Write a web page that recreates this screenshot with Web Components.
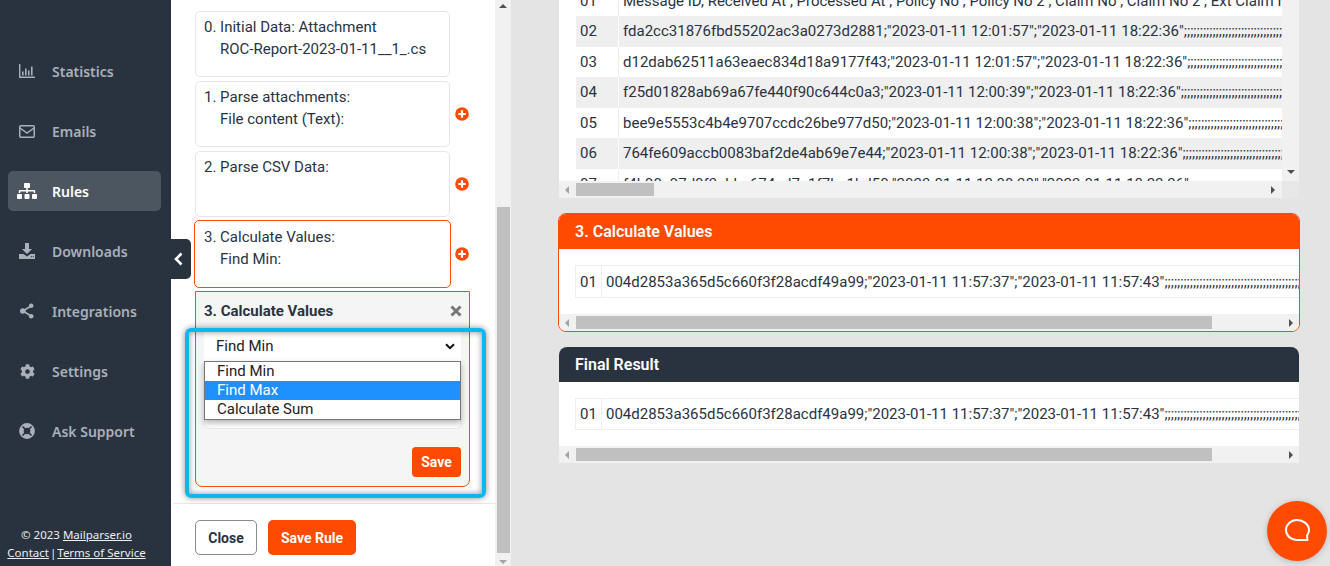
<!DOCTYPE html>
<html lang="en">
<head>
<meta charset="utf-8">
<title>Mailparser rule editor</title>
<style>
    html, body { margin: 0; padding: 0; height: 566px; overflow: hidden; }
    body { font-family: Roboto, "Liberation Sans", sans-serif; font-size: 14px; color: #29333f; }
</style>
</head>
<body>
<rule-app>
    <side-nav slot="nav">
        <nav-item icon="stats">Statistics</nav-item>
        <nav-item icon="mail">Emails</nav-item>
        <nav-item icon="rules" active>Rules</nav-item>
        <nav-item icon="download">Downloads</nav-item>
        <nav-item icon="share">Integrations</nav-item>
        <nav-item icon="cog">Settings</nav-item>
        <nav-item icon="ring">Ask Support</nav-item>
    </side-nav>
    <rule-panel slot="panel">
        <step-card title-text="0. Initial Data: Attachment" sub="ROC-Report-2023-01-11__1_.cs" noplus></step-card>
        <step-card title-text="1. Parse attachments:" sub="File content (Text):"></step-card>
        <step-card title-text="2. Parse CSV Data:"></step-card>
        <step-card title-text="3. Calculate Values:" sub="Find Min:" active></step-card>
        <step-editor></step-editor>
    </rule-panel>
    <result-area slot="results">
        <data-card kind="plain" clip>
            <data-row num="01">Message ID, Received At , Processed At , Policy No , Policy No 2 , Claim No , Claim No 2 , Ext Claim No , Ext Claim No 2</data-row>
            <data-row num="02" shade>fda2cc31876fbd55202ac3a0273d2881;"2023-01-11 12:01:57";"2023-01-11 18:22:36";;;;;;;;;;;;;;;;;;;;;;;;;;;;;;;;;;;;;;;;;;;;;;;;;;;;;;;;;;;;;;;;;;;;;;;;</data-row>
            <data-row num="03">d12dab62511a63eaec834d18a9177f43;"2023-01-11 12:01:57";"2023-01-11 18:22:36";;;;;;;;;;;;;;;;;;;;;;;;;;;;;;;;;;;;;;;;;;;;;;;;;;;;;;;;;;;;;;;;;;;;;;;;</data-row>
            <data-row num="04" shade>f25d01828ab69a67fe440f90c644c0a3;"2023-01-11 12:00:39";"2023-01-11 18:22:36";;;;;;;;;;;;;;;;;;;;;;;;;;;;;;;;;;;;;;;;;;;;;;;;;;;;;;;;;;;;;;;;;;;;;;;;</data-row>
            <data-row num="05">bee9e5553c4b4e9707ccdc26be977d50;"2023-01-11 12:00:38";"2023-01-11 18:22:36";;;;;;;;;;;;;;;;;;;;;;;;;;;;;;;;;;;;;;;;;;;;;;;;;;;;;;;;;;;;;;;;;;;;;;;;</data-row>
            <data-row num="06" shade>764fe609accb0083baf2de4ab69e7e44;"2023-01-11 12:00:38";"2023-01-11 18:22:36";;;;;;;;;;;;;;;;;;;;;;;;;;;;;;;;;;;;;;;;;;;;;;;;;;;;;;;;;;;;;;;;;;;;;;;;</data-row>
            <data-row num="07">f4b90c97d0f3ebbc674ed7a1f7bc1bd50;"2023-01-11 12:00:38";"2023-01-11 18:22:36";;;;;;;;;;;;;;;;;;;;;;;;;;;;;;;;;;;;;;;;;;;;;;;;;;;;;;;;;;;;;;;;;;;;;;;;</data-row>
        </data-card>
        <data-card kind="orange" heading="3. Calculate Values">
            <data-row num="01" boxed tall>004d2853a365d5c660f3f28acdf49a99;"2023-01-11 11:57:37";"2023-01-11 11:57:43";;;;;;;;;;;;;;;;;;;;;;;;;;;;;;;;;;;;;;;;;;;;;;;;;;;;;;;;;;;;;;;;;;;;;;;;</data-row>
        </data-card>
        <data-card kind="dark" heading="Final Result">
            <data-row num="01" boxed>004d2853a365d5c660f3f28acdf49a99;"2023-01-11 11:57:37";"2023-01-11 11:57:43";;;;;;;;;;;;;;;;;;;;;;;;;;;;;;;;;;;;;;;;;;;;;;;;;;;;;;;;;;;;;;;;;;;;;;;;</data-row>
        </data-card>
    </result-area>
    <chat-bubble slot="chat"></chat-bubble>
</rule-app>

<script>
const ORANGE = '#ff4a00';

const NAV_ICONS = {
    stats: '<svg viewBox="0 0 16 14" width="16" height="14" fill="currentColor"><path d="M0 0h1.4v12.6H16V14H0z"/><path d="M3 7.5h1.6v4H3zM6 4.5h1.6v7H6zM9 6.5h1.6v5H9zM12 2.5h1.6v9H12z"/></svg>',
    mail: '<svg viewBox="0 0 16 13" width="16" height="13" fill="none" stroke="currentColor" stroke-width="1.5"><rect x=".75" y=".75" width="14.5" height="11.5" rx="1"/><path d="M1 3l7 5 7-5"/></svg>',
    rules: '<svg viewBox="0 0 640 512" width="20" height="16" fill="currentColor"><path d="M128 352H32c-17.67 0-32 14.33-32 32v96c0 17.67 14.33 32 32 32h96c17.67 0 32-14.33 32-32v-96c0-17.67-14.33-32-32-32zm-24-80h192v48h48v-48h192v48h48v-57.59c0-21.17-17.23-38.41-38.41-38.41H344v-64h40c17.67 0 32-14.33 32-32V32c0-17.67-14.33-32-32-32H256c-17.67 0-32 14.33-32 32v96c0 17.67 14.33 32 32 32h40v64H94.41C73.23 224 56 241.23 56 262.41V320h48v-48zm264 80h-96c-17.67 0-32 14.33-32 32v96c0 17.67 14.33 32 32 32h96c17.67 0 32-14.33 32-32v-96c0-17.67-14.33-32-32-32zm240 0h-96c-17.67 0-32 14.33-32 32v96c0 17.67 14.33 32 32 32h96c17.67 0 32-14.33 32-32v-96c0-17.67-14.33-32-32-32z"/></svg>',
    download: '<svg viewBox="0 0 16 16" width="16" height="16" fill="currentColor"><path d="M6 0h4v6h3l-5 5-5-5h3z"/><path d="M0 11h4.500L8 13.500 11.500 11H16v5H0z"/><circle cx="12.500" cy="13.600" r=".6" fill="#29333f"/><circle cx="14.300" cy="13.600" r=".6" fill="#29333f"/></svg>',
    share: '<svg viewBox="0 0 14 16" width="14" height="16" fill="currentColor" stroke="currentColor"><circle cx="11.200" cy="2.800" r="2.300" stroke="none"/><circle cx="2.800" cy="8" r="2.800" stroke="none"/><circle cx="11.200" cy="13.200" r="2.300" stroke="none"/><path d="M11 3L3 8l8 5" fill="none" stroke-width="1.6"/></svg>',
    cog: '<svg viewBox="0 0 512 512" width="15" height="15" fill="currentColor"><path d="M487.4 315.7l-42.6-24.6c4.3-23.2 4.3-47 0-70.2l42.6-24.6c4.9-2.8 7.1-8.6 5.5-14-11.1-35.6-30-67.8-54.7-94.6-3.8-4.1-10-5.1-14.8-2.3L380.8 110c-17.9-15.4-38.5-27.3-60.8-35.1V25.8c0-5.6-3.9-10.5-9.4-11.7-36.7-8.2-74.3-7.8-109.2 0-5.5 1.2-9.4 6.1-9.4 11.7V75c-22.2 7.9-42.8 19.8-60.8 35.1L88.7 85.5c-4.9-2.8-11-1.9-14.8 2.3-24.7 26.7-43.6 58.9-54.7 94.6-1.7 5.4.6 11.2 5.5 14L67.3 221c-4.3 23.2-4.3 47 0 70.2l-42.6 24.6c-4.9 2.8-7.1 8.6-5.5 14 11.1 35.6 30 67.8 54.7 94.6 3.8 4.1 10 5.1 14.8 2.3l42.6-24.6c17.9 15.4 38.5 27.3 60.8 35.1v49.2c0 5.6 3.9 10.5 9.4 11.7 36.7 8.2 74.3 7.8 109.2 0 5.5-1.2 9.4-6.1 9.4-11.7v-49.2c22.2-7.9 42.8-19.8 60.8-35.1l42.6 24.6c4.9 2.8 11 1.9 14.8-2.3 24.7-26.7 43.6-58.9 54.7-94.6 1.5-5.5-.7-11.3-5.6-14.1zM256 336c-44.1 0-80-35.9-80-80s35.9-80 80-80 80 35.9 80 80-35.9 80-80 80z"/></svg>',
    ring: '<svg viewBox="0 0 16 16" width="16" height="16"><circle cx="8" cy="8" r="5.6" fill="none" stroke="currentColor" stroke-width="4.6"/><path d="M3.500 3.500l2.600 2.600M12.500 3.500L9.900 6.100M3.500 12.500l2.600-2.600M12.500 12.500L9.900 9.900" stroke="#29333f" stroke-width="1.5"/></svg>'
};

class RuleApp extends HTMLElement {
    constructor() {
        super();
        this.attachShadow({ mode: 'open' });
    }

    connectedCallback() {
        this.shadowRoot.innerHTML = `
            <style>
                :host { display: flex; width: 1330px; height: 566px; overflow: hidden; position: relative; background: #e4e4e4; }
                ::slotted([slot="nav"]) { flex: 0 0 171px; }
                ::slotted([slot="panel"]) { flex: 0 0 340px; }
                ::slotted([slot="results"]) { flex: 1; min-width: 0; }
            </style>
            <slot name="nav"></slot>
            <slot name="panel"></slot>
            <slot name="results"></slot>
            <slot name="chat"></slot>
        `;
    }
}

class SideNav extends HTMLElement {
    constructor() {
        super();
        this.attachShadow({ mode: 'open' });
    }

    connectedCallback() {
        this.shadowRoot.innerHTML = `
            <style>
                :host {
                    display: flex;
                    flex-direction: column;
                    height: 566px;
                    box-sizing: border-box;
                    padding-top: 51px;
                    background: #29333f;
                    font-family: "Noto Sans", "Open Sans", sans-serif;
                    position: relative;
                }
                .items { display: flex; flex-direction: column; gap: 20px; }
                footer {
                    margin-top: auto;
                    padding: 0 18px 4px 0;
                    text-align: center;
                    color: #eceef0;
                    font-size: 11.5px;
                    line-height: 18px;
                    white-space: nowrap;
                }
                footer a { color: inherit; text-decoration: underline; }
                .pipe { margin: 0 -2px; }
                .toggle {
                    position: absolute;
                    left: 171px;
                    top: 239px;
                    width: 20px;
                    height: 40px;
                    background: #29333f;
                    border-radius: 0 5px 5px 0;
                    display: flex;
                    align-items: center;
                    padding-left: 3px;
                    box-sizing: border-box;
                }
            </style>
            <div class="items"><slot></slot></div>
            <footer>
                <div>© 2023 <a href="#">Mailparser.io</a></div>
                <div><a href="#">Contact</a> <span class="pipe">|</span> <a href="#">Terms of Service</a></div>
            </footer>
            <div class="toggle">
                <svg viewBox="0 0 9 14" width="9" height="14" fill="none" stroke="#fff" stroke-width="2.6"><path d="M7.500 1.500L2 7l5.500 5.500"/></svg>
            </div>
        `;
    }
}

class NavItem extends HTMLElement {
    constructor() {
        super();
        this.attachShadow({ mode: 'open' });
    }

    connectedCallback() {
        const icon = NAV_ICONS[this.getAttribute('icon')] || '';
        this.shadowRoot.innerHTML = `
            <style>
                :host {
                    display: flex;
                    align-items: center;
                    height: 40px;
                    margin: 0 10px 0 8px;
                    border-radius: 5px;
                    color: #a9b0b8;
                    font-size: 14px;
                    font-weight: 600;
                }
                :host([active]) { background: #4c5660; color: #fff; }
                .ico { flex: 0 0 38px; display: flex; justify-content: center; margin-right: 6px; box-sizing: border-box; }
            </style>
            <span class="ico">${icon}</span>
            <slot></slot>
        `;
    }
}

class RulePanel extends HTMLElement {
    constructor() {
        super();
        this.attachShadow({ mode: 'open' });
    }

    connectedCallback() {
        this.shadowRoot.innerHTML = `
            <style>
                :host { display: flex; height: 566px; background: #fff; }
                .main { width: 324px; display: flex; flex-direction: column; }
                .steps { padding: 11px 0 0 24px; display: flex; flex-direction: column; gap: 4px; height: 503px; box-sizing: border-box; }
                .foot {
                    margin-left: 1px;
                    width: 321px;
                    border-top: 1px solid #e7e7e7;
                    border-radius: 3px 3px 0 0;
                    padding: 16px 0 0 23px;
                    display: flex;
                    gap: 11px;
                }
                .btn {
                    height: 35px;
                    box-sizing: border-box;
                    border-radius: 5px;
                    font: 700 14px Roboto, sans-serif;
                    display: flex;
                    align-items: center;
                    justify-content: center;
                }
                .close { width: 62px; border: 1px solid #8a8a8a; color: #29333f; background: #fff; }
                .save { width: 88px; background: ${ORANGE}; color: #fff; }
                .bar { width: 16px; background: #f1f1f1; display: flex; flex-direction: column; align-items: center; }
                .arrow { width: 0; height: 0; border-left: 4px solid transparent; border-right: 4px solid transparent; }
                .up { border-bottom: 4px solid #505050; margin-top: 4px; }
                .dn { border-top: 4px solid #a3a3a3; margin-bottom: 2px; }
                .thumb { width: 13px; height: 346px; margin-top: auto; margin-bottom: 7px; background: #c0c0c0; }
            </style>
            <div class="main">
                <div class="steps"><slot></slot></div>
                <div class="foot">
                    <div class="btn close">Close</div>
                    <div class="btn save">Save Rule</div>
                </div>
            </div>
            <div class="bar">
                <div class="arrow up"></div>
                <div class="thumb"></div>
                <div class="arrow dn"></div>
            </div>
        `;
    }
}

class StepCard extends HTMLElement {
    constructor() {
        super();
        this.attachShadow({ mode: 'open' });
    }

    connectedCallback() {
        const title = this.getAttribute('title-text') || '';
        const sub = this.getAttribute('sub') || '';
        const plus = this.hasAttribute('noplus') ? '' : `
            <svg class="plus" viewBox="0 0 14 14" width="14" height="14">
                <circle cx="7" cy="7" r="6.8" fill="${ORANGE}"/>
                <path d="M7 3.200v7.600M3.200 7h7.600" stroke="#fff" stroke-width="2.2"/>
            </svg>`;
        this.shadowRoot.innerHTML = `
            <style>
                :host { display: flex; align-items: center; }
                :host([active]) { margin: -1px 0 -1px -1px; }
                .box {
                    width: 255px;
                    height: 66px;
                    box-sizing: border-box;
                    border: 1px solid #e6e6e6;
                    border-radius: 5px;
                    padding: 4px 8px;
                    line-height: 22px;
                    font-size: 15px;
                    white-space: nowrap;
                    overflow: hidden;
                }
                :host([active]) .box { width: 257px; height: 68px; border-color: ${ORANGE}; padding: 5px 9px; }
                .sub { padding-left: 16px; }
                .plus { margin-left: 5px; }
                :host([active]) .plus { margin-left: 4px; }
            </style>
            <div class="box">
                <div>${title}</div>
                <div class="sub">${sub}</div>
            </div>
            ${plus}
        `;
    }
}

class StepEditor extends HTMLElement {
    constructor() {
        super();
        this.attachShadow({ mode: 'open' });
    }

    connectedCallback() {
        this.shadowRoot.innerHTML = `
            <style>
                :host {
                    display: block;
                    position: relative;
                    width: 275px;
                    height: 196px;
                    box-sizing: border-box;
                    border: 1px solid ${ORANGE};
                    border-radius: 0 0 7px 7px;
                    background: #f5f5f5;
                    padding: 0 8px;
                    font-size: 15px;
                }
                .head { display: flex; justify-content: space-between; align-items: center; height: 37px; padding-bottom: 2px; font-weight: 700; font-size: 15px; }
                .head svg { margin-right: -1px; }
                .select {
                    height: 30px;
                    background: #fff;
                    width: 257px;
                    box-sizing: border-box;
                    padding: 0 6px 0 12px;
                    display: flex;
                    align-items: center;
                    justify-content: space-between;
                    color: #222;
                    position: relative;
                }
                .input {
                    width: 257px;
                    height: 68px;
                    box-sizing: border-box;
                    background: #fff;
                    border: 1px solid #eaeaea;
                    border-top: 0;
                    border-radius: 0 0 5px 5px;
                }
                .menu {
                    position: absolute;
                    left: 0;
                    top: 30px;
                    width: 257px;
                    box-sizing: border-box;
                    border: 1px solid #767676;
                    background: #fff;
                    box-shadow: 0 3px 6px rgba(0,0,0,.3);
                    z-index: 2;
                    color: #222;
                }
                .opt { height: 19px; line-height: 19px; padding-left: 12px; }
                .opt.on { background: #1e90ff; color: #fff; }
                .actions { display: flex; justify-content: flex-end; margin-top: 18px; }
                .save {
                    width: 49px;
                    height: 30px;
                    border-radius: 4px;
                    background: ${ORANGE};
                    color: #fff;
                    font-weight: 700;
                    font-size: 14px;
                    display: flex;
                    align-items: center;
                    justify-content: center;
                }
                .mark {
                    position: absolute;
                    left: -11px;
                    top: 36px;
                    width: 301px;
                    height: 170px;
                    box-sizing: border-box;
                    border: 4px solid #0bb7ef;
                    border-radius: 6px;
                    box-shadow: 0 0 6px rgba(0,0,0,.45), inset 0 0 6px rgba(0,0,0,.45);
                    z-index: 3;
                }
            </style>
            <div class="head">
                <span>3. Calculate Values</span>
                <svg viewBox="0 0 12 12" width="12" height="12" stroke="#777" stroke-width="3"><path d="M1.500 1.500l9 9M10.500 1.500l-9 9"/></svg>
            </div>
            <div class="select">
                <span>Find Min</span>
                <svg viewBox="0 0 10 7" width="10" height="7" fill="none" stroke="#111" stroke-width="2"><path d="M1 1.200l4 4 4-4"/></svg>
                <div class="menu">
                    <div class="opt">Find Min</div>
                    <div class="opt on">Find Max</div>
                    <div class="opt">Calculate Sum</div>
                </div>
            </div>
            <div class="input"></div>
            <div class="actions"><div class="save">Save</div></div>
            <div class="mark"></div>
        `;
    }
}

class ResultArea extends HTMLElement {
    constructor() {
        super();
        this.attachShadow({ mode: 'open' });
    }

    connectedCallback() {
        this.shadowRoot.innerHTML = `
            <style>
                :host {
                    display: flex;
                    flex-direction: column;
                    gap: 15px;
                    height: 566px;
                    box-sizing: border-box;
                    padding: 0 30px 0 47px;
                    background: #e4e4e4;
                    overflow: hidden;
                }
            </style>
            <slot></slot>
        `;
    }
}

class ScrollBar extends HTMLElement {
    constructor() {
        super();
        this.attachShadow({ mode: 'open' });
    }

    connectedCallback() {
        this.shadowRoot.innerHTML = `
            <style>
                :host { display: flex; align-items: center; height: 17px; background: #f1f1f1; position: relative; }
                .l, .r { width: 0; height: 0; border-top: 4px solid transparent; border-bottom: 4px solid transparent; }
                .l { border-right: 4px solid #a3a3a3; margin-left: 6px; }
                .thumb { height: 13px; background: #c0c0c0; margin-left: 7px; width: var(--thumb, 636px); }
                .r { border-left: 4px solid #505050; margin-left: auto; margin-right: var(--arrow-gap, 6px); }
            </style>
            <div class="l"></div>
            <div class="thumb"></div>
            <div class="r"></div>
        `;
    }
}

class DataCard extends HTMLElement {
    constructor() {
        super();
        this.attachShadow({ mode: 'open' });
    }

    connectedCallback() {
        const heading = this.getAttribute('heading');
        const kind = this.getAttribute('kind');
        if (kind === 'plain') {
            this.shadowRoot.innerHTML = `
                <style>
                    :host { display: block; width: 740px; margin-left: 1px; background: #fff; }
                    .wrap { display: flex; height: 181px; }
                    .rows { width: 723px; box-sizing: border-box; padding-left: 17px; height: 181px; overflow: hidden; }
                    .inner { margin-top: -14.5px; }
                    .v { width: 17px; background: #f1f1f1; position: relative; display: flex; flex-direction: column; justify-content: flex-end; align-items: center; }
                    .dn { width: 0; height: 0; border-left: 4px solid transparent; border-right: 4px solid transparent; border-top: 4px solid #505050; margin-bottom: 7px; }
                    .foot { display: flex; }
                    scroll-bar { flex: 1; --thumb: 78px; --arrow-gap: 7px; }
                    .corner { width: 17px; height: 17px; background: #e7e7e7; }
                </style>
                <div class="wrap">
                    <div class="rows"><div class="inner"><slot></slot></div></div>
                    <div class="v"><div class="dn"></div></div>
                </div>
                <div class="foot"><scroll-bar></scroll-bar><div class="corner"></div></div>
            `;
            return;
        }
        const orange = kind === 'orange';
        this.shadowRoot.innerHTML = `
            <style>
                :host {
                    display: block;
                    background: #fff;
                    overflow: hidden;
                    box-sizing: border-box;
                    border-radius: ${orange ? '8px' : '8px 8px 0 0'};
                    ${orange ? `width: 742px; border: 1px solid ${ORANGE};` : 'width: 740px; margin-left: 1px;'}
                }
                .head {
                    height: 35px;
                    background: ${orange ? ORANGE : '#29333f'};
                    color: #fff;
                    font-size: 16px;
                    font-weight: 600;
                    display: flex;
                    align-items: center;
                    padding-left: 16px;
                }
                .body { padding: 16px 0 16px 16px; overflow: hidden; }
            </style>
            <div class="head">${heading}</div>
            <div class="body"><slot></slot></div>
            <scroll-bar></scroll-bar>
        `;
    }
}

class DataRow extends HTMLElement {
    constructor() {
        super();
        this.attachShadow({ mode: 'open' });
    }

    connectedCallback() {
        this.shadowRoot.innerHTML = `
            <style>
                :host {
                    display: flex;
                    height: 30.5px;
                    line-height: 30px;
                    font-size: 15px;
                    white-space: nowrap;
                    overflow: hidden;
                    color: #29333f;
                }
                :host([shade]) { background: #efefef; }
                :host([boxed]) { height: 32px; line-height: 31px; box-sizing: border-box; border: 1px solid #eee; border-right: 0; }
                :host([boxed][tall]) { height: 33px; line-height: 32px; }
                .n { flex: 0 0 43px; box-sizing: border-box; padding-left: 4px; border-right: 1px solid #eee; }
                :host([shade]) .n { border-right-color: #fff; }
                :host([boxed]) .n { flex-basis: 26px; }
                .t { padding-left: 4px; }
            </style>
            <div class="n">${this.getAttribute('num')}</div>
            <div class="t"><slot></slot></div>
        `;
    }
}

class ChatBubble extends HTMLElement {
    constructor() {
        super();
        this.attachShadow({ mode: 'open' });
    }

    connectedCallback() {
        this.shadowRoot.innerHTML = `
            <style>
                :host {
                    position: absolute;
                    left: 1267px;
                    top: 501px;
                    width: 60px;
                    height: 60px;
                    border-radius: 50%;
                    background: ${ORANGE};
                    box-shadow: 0 1px 6px rgba(0,0,0,.2);
                    display: flex;
                    align-items: center;
                    justify-content: center;
                }
            </style>
            <svg viewBox="0 0 26 26" width="26" height="26" fill="none" stroke="#fff" stroke-width="2">
                <path d="M13 2C6.800 2 2 6.400 2 12s4.800 10 11 10h10.500l-.5-4.500c1.400-1.600 2-3.500 2-5.500C25 6.400 19.200 2 13 2z" stroke-linejoin="round"/>
            </svg>
        `;
    }
}

customElements.define('rule-app', RuleApp);
customElements.define('side-nav', SideNav);
customElements.define('nav-item', NavItem);
customElements.define('rule-panel', RulePanel);
customElements.define('step-card', StepCard);
customElements.define('step-editor', StepEditor);
customElements.define('result-area', ResultArea);
customElements.define('scroll-bar', ScrollBar);
customElements.define('data-card', DataCard);
customElements.define('data-row', DataRow);
customElements.define('chat-bubble', ChatBubble);
</script>
</body>
</html>
